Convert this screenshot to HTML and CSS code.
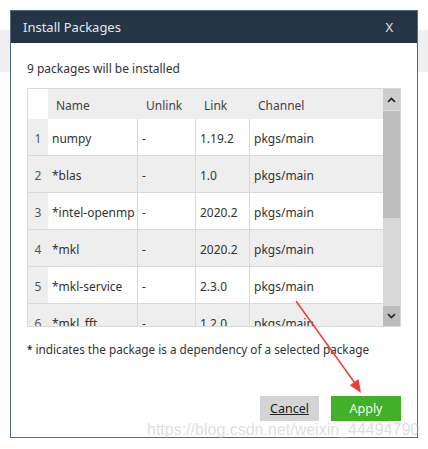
FILE: index.html
```html
<!DOCTYPE html>
<html>
<head>
<meta charset="utf-8">
<link rel="stylesheet" href="styles.css">
</head>
<body>
<div class="page">
  <div class="band"></div>
</div>

<div class="dialog">
  <div class="dlg-head">
    <span class="dlg-title">Install Packages</span>
    <span class="dlg-close">X</span>
  </div>
  <div class="dlg-body">
    <p class="summary">9 packages will be installed</p>
    <div class="grid-box">
      <div class="grid-view">
        <div class="row head">
          <div class="c num corner"></div>
          <div class="c">Name</div>
          <div class="c">Unlink</div>
          <div class="c">Link</div>
          <div class="c">Channel</div>
        </div>
        <div class="row odd">
          <div class="c num">1</div>
          <div class="c">numpy</div>
          <div class="c">-</div>
          <div class="c">1.19.2</div>
          <div class="c last">pkgs/main</div>
        </div>
        <div class="row even">
          <div class="c num">2</div>
          <div class="c">*blas</div>
          <div class="c">-</div>
          <div class="c">1.0</div>
          <div class="c last">pkgs/main</div>
        </div>
        <div class="row odd">
          <div class="c num">3</div>
          <div class="c">*intel-openmp</div>
          <div class="c">-</div>
          <div class="c">2020.2</div>
          <div class="c last">pkgs/main</div>
        </div>
        <div class="row even">
          <div class="c num">4</div>
          <div class="c">*mkl</div>
          <div class="c">-</div>
          <div class="c">2020.2</div>
          <div class="c last">pkgs/main</div>
        </div>
        <div class="row odd">
          <div class="c num">5</div>
          <div class="c">*mkl-service</div>
          <div class="c">-</div>
          <div class="c">2.3.0</div>
          <div class="c last">pkgs/main</div>
        </div>
        <div class="row even">
          <div class="c num">6</div>
          <div class="c">*mkl_fft</div>
          <div class="c">-</div>
          <div class="c">1.2.0</div>
          <div class="c last">pkgs/main</div>
        </div>
      </div>
      <div class="scrollbar">
        <div class="sb-btn sb-up">
          <svg width="9" height="6" viewBox="0 0 9 6"><path d="M1 5 L4.5 1.5 L8 5" fill="none" stroke="#222" stroke-width="1.6"/></svg>
        </div>
        <div class="sb-thumb"></div>
        <div class="sb-track"></div>
        <div class="sb-btn sb-down">
          <svg width="9" height="6" viewBox="0 0 9 6"><path d="M1 1 L4.5 4.5 L8 1" fill="none" stroke="#222" stroke-width="1.6"/></svg>
        </div>
      </div>
    </div>
    <p class="note"><span class="star">*</span> indicates the package is a dependency of a selected package</p>
    <div class="actions">
      <button class="btn btn-cancel">Cancel</button>
      <button class="btn btn-apply">Apply</button>
    </div>
  </div>
</div>

<svg class="annot" width="428" height="449" viewBox="0 0 428 449">
  <line x1="296" y1="301" x2="354.5" y2="382.5" stroke="#e8413c" stroke-width="1.5"/>
  <polygon points="361,393 349.8,385.2 358.6,379" fill="#e8413c"/>
</svg>
<div class="watermark">https://blog.csdn.net/weixin_44494790</div>
</body>
</html>
```

FILE: styles.css
```css
html, body {
  margin: 0;
  padding: 0;
  background: #ffffff;
  font-family: "Noto Sans", "DejaVu Sans", sans-serif;
}

.page {
  width: 428px;
  height: 449px;
  padding-top: 30px;
  box-sizing: border-box;
}

.band {
  height: 42px;
  background: #efefef;
}

.dialog {
  position: absolute;
  left: 10px;
  top: 10px;
  width: 408px;
  height: 428px;
  box-sizing: border-box;
  border: 1px solid #4f6b82;
  background: #ffffff;
  display: flex;
  flex-direction: column;
}

.dlg-head {
  height: 32px;
  background: #253545;
  color: #e4e8ec;
  display: flex;
  align-items: center;
  justify-content: space-between;
  padding: 0 24px 0 12px;
  font-size: 13px;
}

.dlg-close {
  font-size: 13px;
}

.dlg-body {
  flex: 1;
  display: flex;
  flex-direction: column;
  padding: 0 16px 16px 16px;
}

.summary {
  margin: 17px 0 10px 0;
  font-size: 12px;
  line-height: 18px;
  color: #333333;
}

.grid-box {
  height: 239px;
  box-sizing: border-box;
  border: 1px solid #d9d9d9;
  display: flex;
}

.grid-view {
  width: 355px;
  overflow: hidden;
}

.row {
  display: grid;
  grid-template-columns: 20px 90px 58px 54px 133px;
  font-size: 12px;
  color: #333333;
}

.row.head {
  height: 30px;
  background: #eeeeee;
  color: #444444;
}

.row.head .c {
  line-height: 30px;
  padding: 2px 0 0 8px;
}

.row.head .c.num {
  padding: 0;
}

.c {
  box-sizing: border-box;
  white-space: nowrap;
  overflow: hidden;
}

.row.odd .c,
.row.even .c {
  height: 37px;
  line-height: 36px;
  border-bottom: 1px solid #d9d9d9;
  border-right: 1px solid #d9d9d9;
  padding: 2px 0 0 4px;
}

.row .c.last {
  border-right: none;
}

.row.odd .c.num,
.row.even .c.num {
  border-right: none;
  padding: 2px 0 0 0;
  text-align: center;
  background: #eeeeee;
  color: #555555;
}

.row.head .c.corner {
  background: #ffffff;
}

.row.odd .c {
  background: #ffffff;
}

.row.even .c {
  background: #eeeeee;
}

.scrollbar {
  width: 17px;
  display: flex;
  flex-direction: column;
}

.sb-btn {
  display: flex;
  align-items: center;
  justify-content: center;
}

.sb-up {
  height: 21px;
  background: #cdcdcd;
  border-bottom: 1px solid #e0e0e0;
}

.sb-thumb {
  height: 107px;
  background: #bdbdbd;
}

.sb-track {
  flex: 1;
  background: #d8d8d8;
}

.sb-down {
  height: 20px;
  background: #bdbdbd;
}

.note {
  margin: 13px 0 0 0;
  font-size: 11.75px;
  line-height: 18px;
  color: #333333;
}

.star {
  font-size: 10px;
  font-weight: bold;
  vertical-align: 1px;
}

.actions {
  margin-top: auto;
  display: flex;
  justify-content: flex-end;
  gap: 12px;
}

.btn {
  border: none;
  height: 25px;
  font-family: "Noto Sans", "DejaVu Sans", sans-serif;
  font-size: 12.5px;
  padding: 0;
}

.btn-cancel {
  width: 59px;
  background: #d4d4d4;
  color: #222222;
  text-decoration: underline;
}

.btn-apply {
  width: 70px;
  background: #43b02a;
  color: #f2fbef;
}

.annot {
  position: absolute;
  left: 0;
  top: 0;
  pointer-events: none;
}

.watermark {
  position: absolute;
  left: 147px;
  top: 422px;
  font-family: "Liberation Sans", Arial, sans-serif;
  font-size: 16px;
  line-height: 16px;
  color: rgba(180, 180, 180, 0.45);
  white-space: nowrap;
  pointer-events: none;
}
```
